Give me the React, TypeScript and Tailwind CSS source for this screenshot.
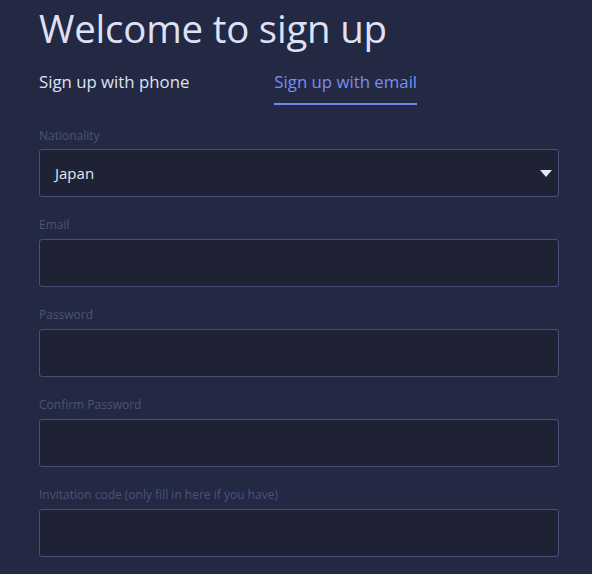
import { useState } from 'react';

type FieldProps = {
  label: string;
  type?: string;
};

function Field({ label, type = 'text' }: FieldProps) {
  return (
    <div className="flex flex-col">
      <label className="h-[18px] text-[12px] leading-[18px] text-[#4d5377]">{label}</label>
      <input
        type={type}
        className="mt-[5px] h-[48px] w-full rounded-[3px] border border-[#4a4f7a] bg-[#1f2235] px-4 text-[15px] text-[#e3e6f3] outline-none"
      />
    </div>
  );
}

export default function App() {
  const [tab, setTab] = useState<'phone' | 'email'>('email');

  return (
    <div className="h-[574px] w-[592px] overflow-hidden bg-[#232843] pl-[39px] pr-[33px] font-['Open_Sans','Noto_Sans',sans-serif]">
      <h1 className="pt-[2px] text-[38.4px] leading-[52px] font-normal tracking-[-0.2px] text-[#dde1f6]">
        Welcome to sign up
      </h1>

      <div className="mt-[16px] flex gap-[85px]">
        <button
          type="button"
          onClick={() => setTab('phone')}
          className={`pb-[9px] text-[16.8px] leading-[24px] ${
            tab === 'phone' ? 'border-b-2 border-[#7487ec] text-[#7b8ef0]' : 'border-b-2 border-transparent text-[#dfe3f4]'
          }`}
        >
          Sign up with phone
        </button>
        <button
          type="button"
          onClick={() => setTab('email')}
          className={`pb-[9px] text-[16.8px] leading-[24px] ${
            tab === 'email' ? 'border-b-2 border-[#7487ec] text-[#7b8ef0]' : 'border-b-2 border-transparent text-[#dfe3f4]'
          }`}
        >
          Sign up with email
        </button>
      </div>

      <div className="mt-[22px] flex flex-col gap-[19px]">
        <div className="flex flex-col">
          <label className="h-[18px] text-[12px] leading-[18px] text-[#4d5377]">Nationality</label>
          <div className="relative mt-[4px] flex h-[48px] items-center rounded-[3px] border border-[#4a4f7a] bg-[#1f2235] px-[15px]">
            <span className="text-[15px] text-[#e3e6f3]">Japan</span>
            <svg className="absolute right-[6px] top-[20px]" width="12" height="7" viewBox="0 0 12 7">
              <path d="M0 0h12L6 7z" fill="#e6e8f2" />
            </svg>
          </div>
        </div>
        <Field label="Email" type="email" />
        <Field label="Password" type="password" />
        <Field label="Confirm Password" type="password" />
        <Field label="Invitation code (only fill in here if you have)" />
      </div>
    </div>
  );
}
